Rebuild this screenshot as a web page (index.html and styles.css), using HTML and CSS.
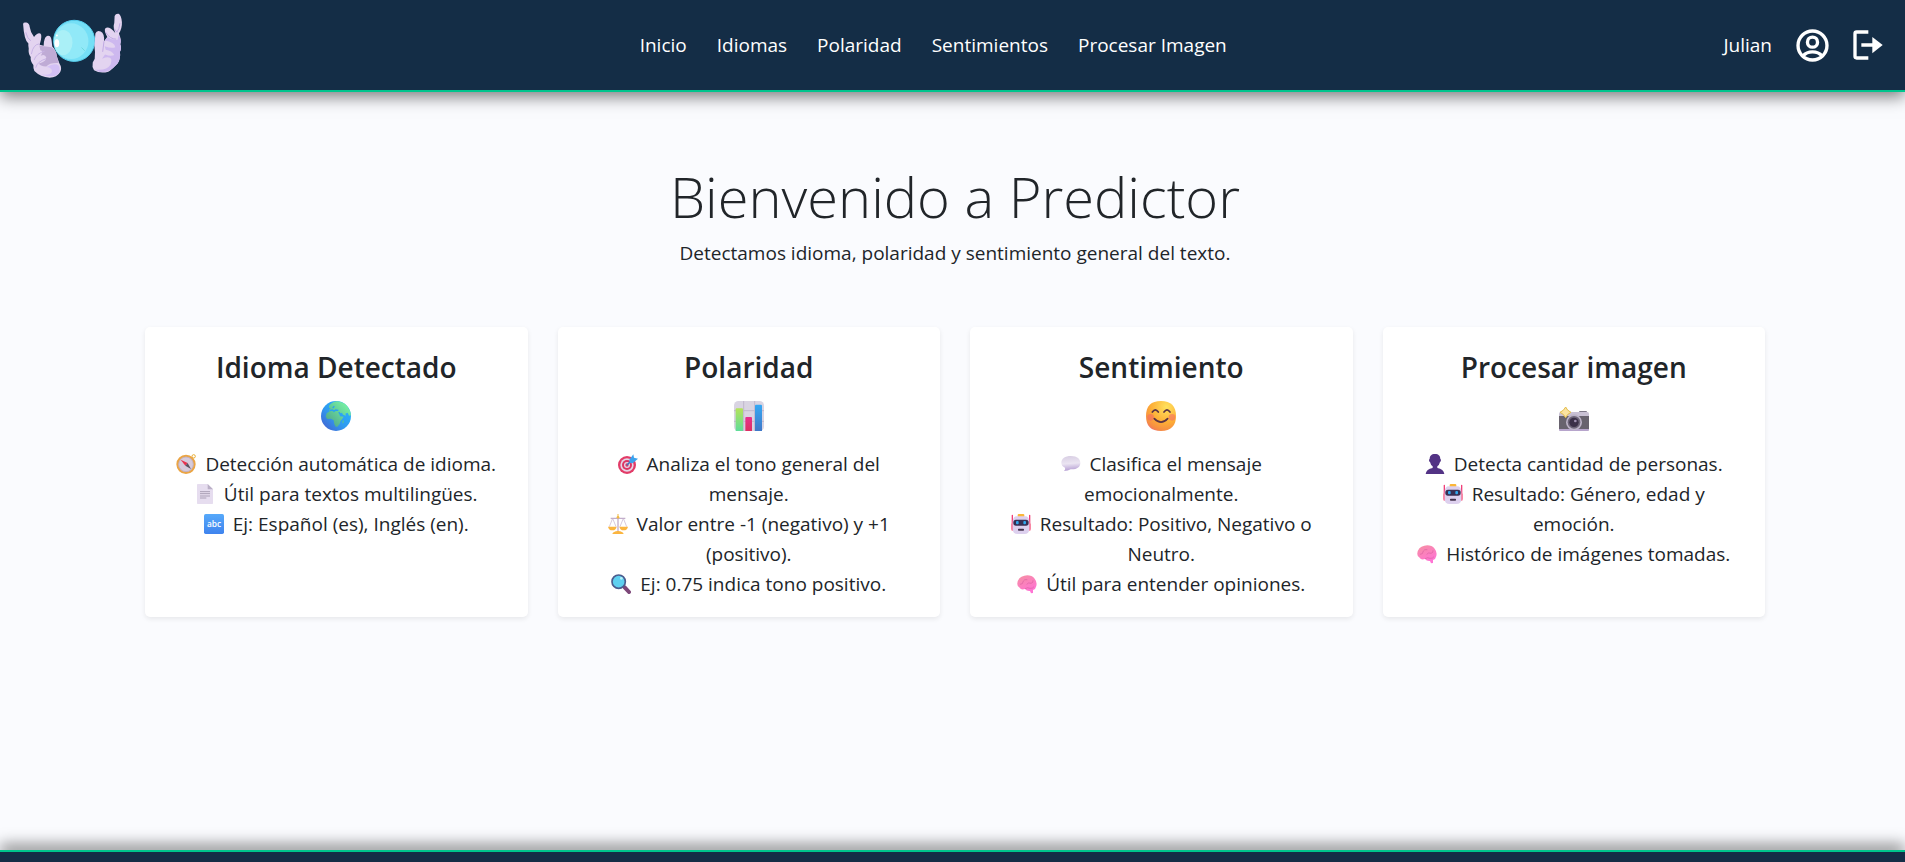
FILE: index.html
```html
<!DOCTYPE html>
<html lang="es">
<head>
<meta charset="utf-8">
<meta name="viewport" content="width=device-width, initial-scale=1">
<title>Predictor</title>
<link rel="stylesheet" href="styles.css">
</head>
<body>
<svg class="sprite" aria-hidden="true">
  <defs>
    <linearGradient id="g-sea" x1="1" y1="0" x2="0" y2="1"><stop offset="0" stop-color="#25b8ff"/><stop offset=".55" stop-color="#2f9bf0"/><stop offset="1" stop-color="#4758cc"/></linearGradient>
    <linearGradient id="g-land" x1="1" y1="0" x2="0" y2="1"><stop offset="0" stop-color="#7dffa8"/><stop offset="1" stop-color="#4a9c88"/></linearGradient>
    <linearGradient id="g-bar1" x1="0" y1="0" x2="0" y2="1"><stop offset="0" stop-color="#b4e35a"/><stop offset="1" stop-color="#5fdc9a"/></linearGradient>
    <linearGradient id="g-bar2" x1="0" y1="0" x2="0" y2="1"><stop offset="0" stop-color="#e8308c"/><stop offset="1" stop-color="#dc2f62"/></linearGradient>
    <linearGradient id="g-bar3" x1="0" y1="0" x2="0" y2="1"><stop offset="0" stop-color="#35a8f4"/><stop offset="1" stop-color="#4078c8"/></linearGradient>
    <radialGradient id="g-face" cx=".68" cy=".2" r=".95"><stop offset="0" stop-color="#ffe25e"/><stop offset=".55" stop-color="#fdad35"/><stop offset=".85" stop-color="#f58a45"/><stop offset="1" stop-color="#e8609a"/></radialGradient>
    <linearGradient id="g-brain" x1="0" y1="0" x2=".5" y2="1"><stop offset="0" stop-color="#f690a2"/><stop offset="1" stop-color="#ff74d4"/></linearGradient>
    <linearGradient id="g-bubble" x1=".4" y1="0" x2=".5" y2="1"><stop offset="0" stop-color="#d9cfe4"/><stop offset=".5" stop-color="#ebe5f2"/><stop offset="1" stop-color="#b39bd2"/></linearGradient>
    <linearGradient id="g-abc" x1="0" y1="0" x2="0" y2="1"><stop offset="0" stop-color="#56a9fa"/><stop offset="1" stop-color="#3f83ee"/></linearGradient>
  </defs>
  <symbol id="globe" viewBox="0 0 90 90">
    <circle cx="45" cy="45" r="45" fill="url(#g-sea)"/>
    <path fill="url(#g-land)" d="M24 14Q33 3 47 1Q68 2 80 17Q90 30 90 43L84 44L80 35L73 38L75 44L66 41L63 35L55 38L57 46L68 47L63 55L58 61L56 69L49 77L44 77L40 70L38 58L30 53L19 54L14 47L17 37L26 31L24 27L29 22L24 20Z"/>
    <path fill="none" stroke="#29a1f2" stroke-width="4" d="M26 29L34 27L39 31L44 27L52 28M35 21L40 16M58 39L53 34"/>
    <path fill="#54c49a" d="M64 60l4-3v7l-3 4z"/>
  </symbol>
  <symbol id="chart" viewBox="0 0 90 90">
    <rect width="90" height="90" rx="13" fill="#d9d4e2"/>
    <path d="M29 0V90M62 0V90M0 29H90M0 61H90" stroke="#c1b8cd" stroke-width="3"/>
    <path fill="url(#g-bar1)" d="M5 90V25q0-3 3-3H24q3 0 3 3V90z"/>
    <path fill="url(#g-bar2)" d="M34 90V51q0-3 3-3H51q3 0 3 3V90z"/>
    <path fill="url(#g-bar3)" d="M63 90V14q0-3 3-3H81q3 0 3 3V90z"/>
  </symbol>
  <symbol id="smile" viewBox="0 0 90 90">
    <path fill="url(#g-face)" d="M45 0C75 0 90 16 90 45S75 90 45 90S0 75 0 45S15 0 45 0z"/>
    <circle cx="14" cy="49" r="10" fill="#f4606c" opacity=".5"/><circle cx="78" cy="49" r="10" fill="#f4606c" opacity=".5"/>
    <g fill="none" stroke="#5a3345" stroke-width="5" stroke-linecap="round"><path d="M19 33Q28 20 37 33"/><path d="M54 33Q63 20 72 33"/><path d="M25 53Q45 74 65 53"/></g>
  </symbol>
  <symbol id="camera" viewBox="0 0 90 90">
    <rect x="60" y="30" width="24" height="8" rx="3" fill="#7d7787"/>
    <rect y="33" width="90" height="57" rx="5" fill="#c9c1d4"/>
    <rect y="45" width="90" height="39" fill="#68636e"/>
    <path fill="#b7a5cc" d="M0 84H90V86q0 4-4 4H4q-4 0-4-4z"/>
    <circle cx="45" cy="64" r="24" fill="#bdb4c8"/><circle cx="45" cy="64" r="19" fill="#6d6578"/><circle cx="45" cy="64" r="14" fill="#3b3048"/><circle cx="49" cy="60" r="4" fill="#9f91b0"/>
    <path d="M20 18Q24 29 36 34Q24 39 20 50Q15 39 3 34Q15 29 20 18z" fill="#fbe3a0" stroke="#e3bd4c" stroke-width="3"/>
  </symbol>
  <symbol id="compass" viewBox="0 0 60 60">
    <circle cx="53" cy="7" r="5" fill="none" stroke="#e8ae35" stroke-width="3"/>
    <circle cx="30" cy="31" r="26" fill="#d6cbdc" stroke="#eba544" stroke-width="6"/>
    <circle cx="30" cy="31" r="22" fill="none" stroke="#b9a4b4" stroke-width="2"/>
    <path fill="#e8324f" d="M14 17L35 27L28 35z"/><path fill="#5a5261" d="M28 35L35 27L45 45z"/>
  </symbol>
  <symbol id="page" viewBox="0 0 60 60">
    <path fill="#e6ddef" d="M6 2q0-2 2-2H38L54 16V58q0 2-2 2H8q-2 0-2-2z"/><path fill="#baafc6" d="M38 0L54 16H40q-2 0-2-2z"/>
    <path d="M15 23H45M15 29H45M15 36H45M15 42H34" stroke="#aa9fb5" stroke-width="3"/>
  </symbol>
  <symbol id="target" viewBox="0 0 60 60">
    <circle cx="27" cy="33" r="27" fill="#e23c68"/><circle cx="27" cy="33" r="20" fill="#e5d7e6"/><circle cx="27" cy="33" r="15" fill="#dd3565"/><circle cx="27" cy="33" r="9" fill="#e5d7e6"/><circle cx="27" cy="33" r="5" fill="#d93968"/>
    <path d="M27 33L46 14" stroke="#3478c4" stroke-width="4"/><path fill="#3ba2ed" d="M34 17L46 1L48 11L60 14L44 28L35 26z"/>
  </symbol>
  <symbol id="scales" viewBox="0 0 60 60">
    <g fill="none" stroke="#c3aecb" stroke-width="2"><path d="M14 13L4 38M14 13L24 38M46 13L36 38M46 13L56 38"/><path d="M8 13H52M30 8V54" stroke-width="4"/></g>
    <circle cx="30" cy="10" r="4" fill="#f1b840"/><path d="M30 0V8" stroke="#f1b840" stroke-width="3"/>
    <path fill="#fbb53f" d="M0 38H26Q24 49 13 49T0 38zM34 38H60Q58 49 47 49T34 38zM13 60Q15 52 30 51Q45 52 47 60z"/>
  </symbol>
  <symbol id="magnifier" viewBox="0 0 60 60">
    <path d="M41 40L54 54" stroke="#7d4779" stroke-width="12" stroke-linecap="round"/>
    <circle cx="23" cy="23" r="20" fill="#5fd0f0" stroke="#4b5c8e" stroke-width="5"/><circle cx="31" cy="13" r="4" fill="#b7f2fb"/>
  </symbol>
  <symbol id="bubble" viewBox="0 0 60 60">
    <path fill="url(#g-bubble)" d="M30 6C49 6 58 15 58 27S48 47 29 46Q22 51 9 51Q14 47 12 41Q1 36 1 26C1 14 12 6 30 6z"/>
  </symbol>
  <symbol id="robot" viewBox="0 0 60 60">
    <path d="M4 4V44M56 4V44" stroke="#f03f78" stroke-width="4" stroke-linecap="round"/><path d="M4 31V47M56 31V47" stroke="#f86b8e" stroke-width="6" stroke-linecap="round"/>
    <rect x="20" y="0" width="20" height="10" rx="3" fill="#fbb638"/>
    <path fill="#ddd0ee" d="M18 7H42Q55 7 55 24V46Q55 60 40 60H20Q5 60 5 46V24Q5 7 18 7z"/>
    <rect x="7" y="17" width="46" height="18" rx="8" fill="#382e52"/><rect x="15" y="21" width="8" height="10" rx="3" fill="#31a7ec"/><rect x="37" y="21" width="8" height="10" rx="3" fill="#31a7ec"/>
    <rect x="21" y="44" width="18" height="6" rx="2" fill="#44334d"/>
  </symbol>
  <symbol id="brain" viewBox="0 0 60 60">
    <path fill="url(#g-brain)" d="M1 28Q3 9 22 5Q42 1 53 14Q61 24 58 36Q56 46 48 48L48 57L42 58L39 51Q29 52 24 45Q12 49 8 41Q0 38 1 28z"/>
    <path fill="none" stroke="#d961a0" stroke-width="2" d="M9 31Q18 32 19 21Q22 15 31 17M29 31Q35 24 42 28Q49 27 48 19M24 44Q32 39 39 43Q47 44 51 38"/>
  </symbol>
  <symbol id="bust" viewBox="0 0 60 60">
    <path fill="#533385" d="M30 0C41 0 46 6 46 15C49 15 48 24 45 24Q43 33 37 37V42Q56 45 58 60H2Q4 45 23 42V37Q17 33 15 24C12 24 11 15 14 15C14 6 19 0 30 0z"/>
  </symbol>
</svg>

<header class="topbar">
  <a class="brand" href="#" aria-label="Predictor">
    <svg class="brand-logo" viewBox="66 36 304 196" aria-hidden="true">
      <path fill="#e3d4f0" d="M69 69Q70 63 79 65Q88 67 89 78Q91 94 102 108Q113 94 121 98Q128 103 119 132L131 135Q131 111 141 105Q154 102 155 120L157 137Q169 148 171 167L179 189Q187 201 181 214Q171 231 149 231Q121 229 103 211Q99 201 100 193Q90 181 92 169Q84 159 86 143Q84 132 85 128Q72 118 69 69z"/>
      <path fill="#bfabd5" d="M118 134L132 136L155 139Q169 148 171 167L176 187Q150 185 139 197Q119 196 117 188Q137 184 139 170Q135 158 122 165Q132 150 121 148z"/>
      <path fill="#d3c0f5" d="M140 199Q164 185 177 195Q184 212 172 222Q152 232 122 220Q150 226 156 213Q157 201 140 199z"/>
      <path fill="none" stroke="#c7b2e5" stroke-width="3" d="M77 94Q82 115 93 120M118 129Q99 131 94 160M134 151Q109 158 102 178M138 174Q112 182 107 201"/>
      <circle cx="223" cy="120" r="62" fill="#75dff6" stroke="#55cdec" stroke-width="3"/>
      <ellipse cx="214" cy="121" rx="52" ry="54" fill="#91e9f8"/><ellipse cx="190" cy="125" rx="28" ry="38" fill="#aaf0f7"/>
      <ellipse cx="171" cy="127" rx="7" ry="12" fill="#fff"/><circle cx="171" cy="104" r="3" fill="#fff"/>
      <path d="M245 140l10 10" stroke="#6ed8df" stroke-width="3"/>
      <path fill="#e3d4f0" d="M345 45Q348 37 357 38Q365 42 367 63Q368 82 358 98Q366 117 362 130Q367 141 361 153Q364 175 354 188Q337 206 326 213Q302 220 283 209Q276 198 279 185L285 174Q287 151 284 135L287 98Q291 87 303 92Q315 98 313 121L323 108Q311 87 318 81Q330 76 347 96Q339 78 344 66z"/>
      <path fill="#cdb8ef" d="M357 102Q367 116 362 130Q367 143 361 153Q364 175 354 188Q341 203 326 211Q305 219 284 206Q321 211 333 191Q342 165 317 170L307 174L316 161Q333 168 344 163Q337 150 318 147L315 136Q336 144 347 139Q345 124 315 119L323 108Q340 120 354 117z"/>
      <path fill="none" stroke="#c0a9e3" stroke-width="3" d="M318 94Q331 115 350 115M313 121L309 153M344 83L352 94Q359 85 361 67"/>
    </svg>
  </a>
  <nav class="menu" aria-label="Principal">
    <a href="#">Inicio</a>
    <a href="#">Idiomas</a>
    <a href="#">Polaridad</a>
    <a href="#">Sentimientos</a>
    <a href="#">Procesar Imagen</a>
  </nav>
  <div class="account">
    <span>Julian</span>
    <a class="account-link" href="#" aria-label="Perfil">
      <svg class="account-icon" viewBox="288 83 98 98" fill="none" stroke="#fff" stroke-width="10" aria-hidden="true"><circle cx="337" cy="132" r="43"/><circle cx="337" cy="122" r="15"/><path d="M309 163Q319 151 337 151T365 163"/></svg>
    </a>
    <a class="account-link" href="#" aria-label="Cerrar sesión">
      <svg class="exit-icon" viewBox="461 87 90 90" aria-hidden="true"><path d="M507 93H472Q467 93 467 98V166Q467 171 472 171H507M486 132H524" fill="none" stroke="#fff" stroke-width="10"/><path d="M519 108L550 132L519 157z" fill="#fff"/></svg>
    </a>
  </div>
</header>

<main class="content">
  <h1 class="title">Bienvenido a Predictor</h1>
  <p class="lead">Detectamos idioma, polaridad y sentimiento general del texto.</p>
  <div class="cards">
    <section class="card">
      <h2>Idioma Detectado</h2>
      <svg class="hero-icon" aria-hidden="true"><use href="#globe"/></svg>
      <ul>
        <li><svg class="emoji" aria-hidden="true"><use href="#compass"/></svg> Detección automática de idioma.</li>
        <li><svg class="emoji" aria-hidden="true"><use href="#page"/></svg> Útil para textos multilingües.</li>
        <li><svg class="emoji" viewBox="0 0 60 60" aria-hidden="true"><rect width="60" height="60" rx="5" fill="url(#g-abc)"/><text x="30" y="39" class="abc-label">abc</text></svg> Ej: Español (es), Inglés (en).</li>
      </ul>
    </section>
    <section class="card">
      <h2>Polaridad</h2>
      <svg class="hero-icon" aria-hidden="true"><use href="#chart"/></svg>
      <ul>
        <li><svg class="emoji" aria-hidden="true"><use href="#target"/></svg> Analiza el tono general del mensaje.</li>
        <li><svg class="emoji" aria-hidden="true"><use href="#scales"/></svg> Valor entre -1 (negativo) y +1 (positivo).</li>
        <li><svg class="emoji" aria-hidden="true"><use href="#magnifier"/></svg> Ej: 0.75 indica tono positivo.</li>
      </ul>
    </section>
    <section class="card">
      <h2>Sentimiento</h2>
      <svg class="hero-icon" aria-hidden="true"><use href="#smile"/></svg>
      <ul>
        <li><svg class="emoji" aria-hidden="true"><use href="#bubble"/></svg> Clasifica el mensaje emocionalmente.</li>
        <li><svg class="emoji" aria-hidden="true"><use href="#robot"/></svg> Resultado: Positivo, Negativo o Neutro.</li>
        <li><svg class="emoji" aria-hidden="true"><use href="#brain"/></svg> Útil para entender opiniones.</li>
      </ul>
    </section>
    <section class="card">
      <h2>Procesar imagen</h2>
      <svg class="hero-icon" aria-hidden="true"><use href="#camera"/></svg>
      <ul>
        <li><svg class="emoji" aria-hidden="true"><use href="#bust"/></svg> Detecta cantidad de personas.</li>
        <li><svg class="emoji" aria-hidden="true"><use href="#robot"/></svg> Resultado: Género, edad y emoción.</li>
        <li><svg class="emoji" aria-hidden="true"><use href="#brain"/></svg> Histórico de imágenes tomadas.</li>
      </ul>
    </section>
  </div>
</main>
<footer class="footer"></footer>
</body>
</html>
```

FILE: styles.css
```css
* { box-sizing: border-box; }

body {
  margin: 0;
  min-height: 100vh;
  display: flex;
  flex-direction: column;
  background: #fafbfe;
  color: #212529;
  font: 400 19px/30px "Open Sans", "Noto Sans", sans-serif;
}

a { color: inherit; text-decoration: none; }

.sprite { position: absolute; width: 0; height: 0; }

.topbar {
  display: flex;
  align-items: center;
  justify-content: space-between;
  min-height: 92px;
  padding: 0 22px;
  background: #142d46;
  border-bottom: 2px solid #00c48c;
  box-shadow: 0 5px 15px rgba(0, 0, 0, 0.5);
  color: #fff;
}

.brand { padding-right: 20px; }
.brand-logo { display: block; width: 101px; height: 65px; }

.menu { display: flex; gap: 30px; }

.account { display: flex; align-items: center; gap: 24px; }
.account-link { display: block; }
.account-icon { display: block; width: 33px; height: 33px; }
.exit-icon { display: block; width: 30px; height: 30px; }

.content {
  flex: 1;
  padding: 62px 140px 60px 145px;
  text-align: center;
}

.title {
  margin: 0;
  font-size: 56px;
  font-weight: 300;
  line-height: 84px;
}

.lead { margin: 0 0 59px; }

.cards {
  display: grid;
  grid-template-columns: repeat(4, 1fr);
  gap: 30px;
}

.card {
  padding: 20px 26px 18px;
  background: #fff;
  border-radius: 5px;
  box-shadow: 0 2px 5px rgba(0, 0, 0, 0.08);
}

.card h2 {
  margin: 0 0 14px;
  font-size: 28px;
  font-weight: 600;
  line-height: 40px;
}

.hero-icon { display: block; width: 30px; height: 30px; margin: 0 auto 18px; }

.card ul { margin: 0; padding: 0; list-style: none; }

.emoji { width: 20px; height: 20px; margin-right: 4px; vertical-align: -3px; }

.abc-label {
  fill: #fff;
  font: 600 25px "Open Sans", sans-serif;
  text-anchor: middle;
}

.footer {
  height: 12px;
  background: #142d46;
  border-top: 2px solid #00c48c;
  box-shadow: 0 -5px 15px rgba(0, 0, 0, 0.5);
}
```
